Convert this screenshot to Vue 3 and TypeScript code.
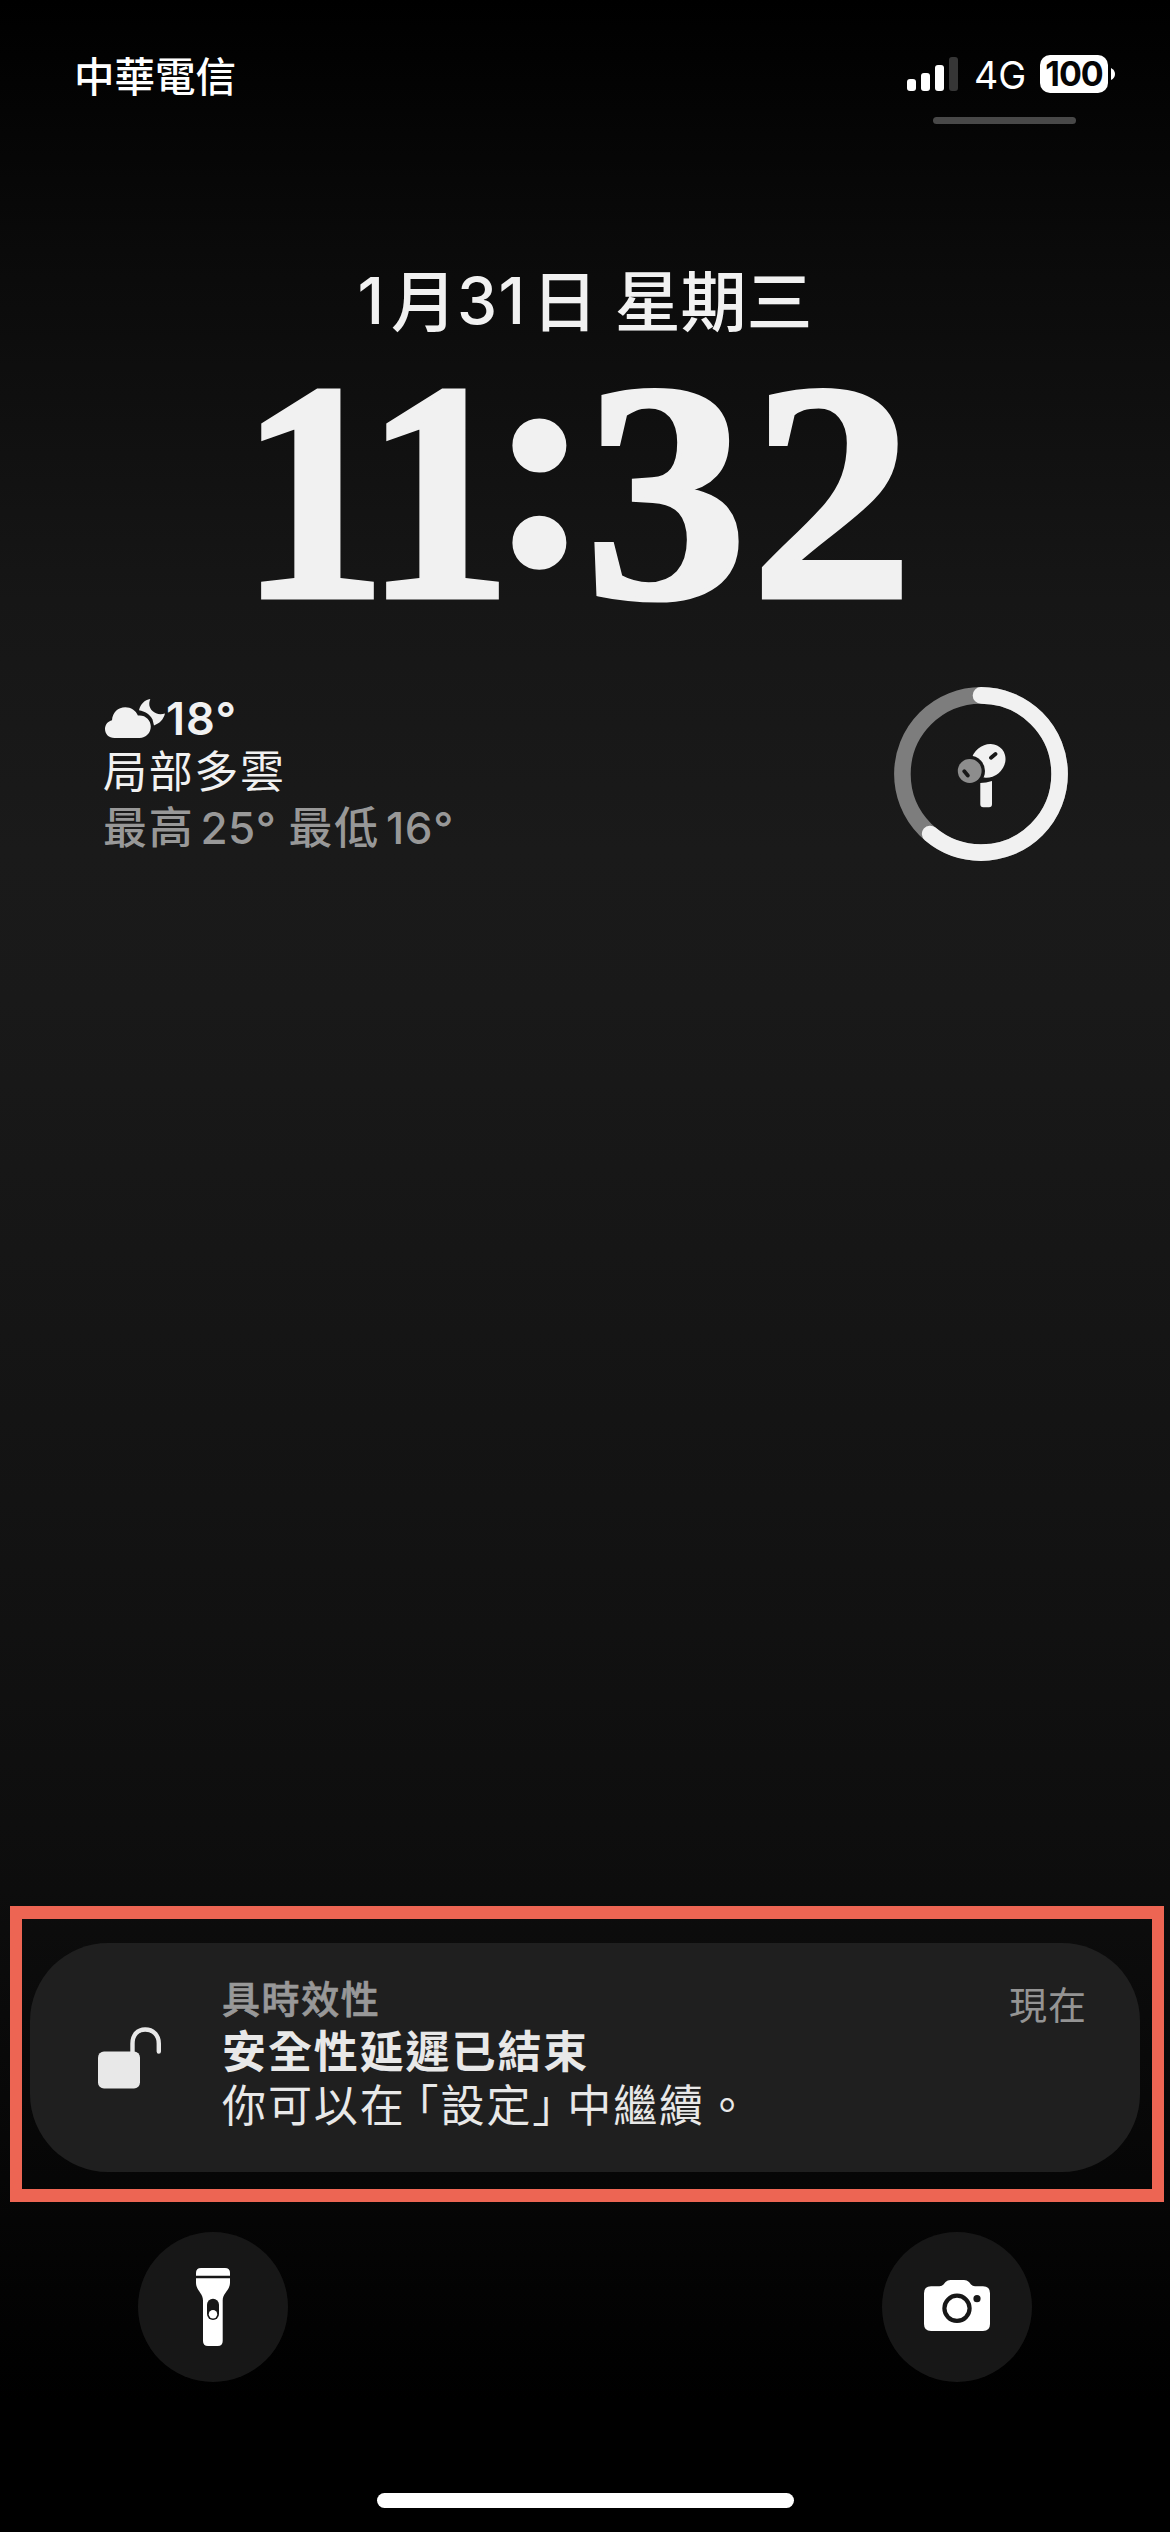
<script setup lang="ts">
interface ClockGlyph {
  char: string
  kind: string
}

const carrier = '中華電信'
const network = '4G'
const battery = 100
const signalBars = [
  { height: 12, active: true },
  { height: 18, active: true },
  { height: 26, active: true },
  { height: 34, active: false },
]

const clock: ClockGlyph[] = [
  { char: '11', kind: 'ones' },
  { char: ':', kind: 'colon' },
  { char: '3', kind: 'three' },
  { char: '2', kind: 'two' },
]
</script>

<template>
  <main class="screen">
    <header class="status">
      <span class="carrier">{{ carrier }}</span>
      <div class="indicators">
        <div class="signal">
          <i
            v-for="(bar, i) in signalBars"
            :key="i"
            class="bar"
            :class="{ dim: !bar.active }"
            :style="{ height: bar.height + 'px' }"
          ></i>
        </div>
        <span class="network">{{ network }}</span>
        <div class="battery">{{ battery }}</div>
        <svg class="nub" width="4" height="12" viewBox="0 0 4 12"><path d="M0 0Q4 2 4 6T0 12Z" fill="#fff" /></svg>
      </div>
    </header>
    <div class="grabber"></div>

    <div class="date"><span class="month">1</span><span class="han">月</span><span class="day">31</span><span class="han">日</span><span class="han week">星期三</span></div>

    <div class="clock">
      <span v-for="(g, i) in clock" :key="i" class="glyph" :class="g.kind"><b>{{ g.char }}</b></span>
    </div>

    <section class="widgets">
      <div class="weather">
        <div class="temp">
          <svg width="62" height="41" viewBox="0 0 62 41" fill="#f1f1f1">
            <path d="M10.5 40C4.8 40 1 36 1 31c0-4.500 3-7.800 7-8.800C8.500 14.500 14 9.300 21.300 9.300c5.700 0 10.500 3.300 12.600 8.200C41 16.500 46.800 21.700 46.800 28.600 46.800 35 42 40 35.500 40Z" />
            <path d="M46.300 1C40.500 2 36.500 6 35 12.200 41 13.300 45.800 16 48.500 21.500L50 27.400C55.500 25.500 59.500 21.500 61 15.500 56 17 51.500 16 48.500 13 45 9.500 44.500 5.500 46.300 1Z" />
          </svg>
          <span>18°</span>
        </div>
        <div class="condition">局部多雲</div>
        <div class="range"><span class="han">最高</span><span class="deg">25°</span><span class="han low">最低</span><span class="deg">16°</span></div>
      </div>
      <svg class="ring" width="174" height="174" viewBox="0 0 174 174" fill="none">
        <circle cx="87" cy="87" r="78.600" stroke="#7d7d7d" stroke-width="16.600" />
        <circle
          cx="87" cy="87" r="78.600" stroke="#f1f1f1" stroke-width="16.600" stroke-linecap="round"
          pathLength="100" stroke-dasharray="61.200 100" transform="rotate(-90 87 87)"
        />
        <ellipse cx="94.300" cy="73.900" rx="18" ry="16" transform="rotate(-40 94.300 73.900)" fill="#f1f1f1" />
        <path d="M86.300 96Q92 95.800 98 94V117.300Q98 120.300 95 120.300H89.300Q86.300 120.300 86.300 117.300Z" fill="#f1f1f1" />
        <circle cx="75.700" cy="84" r="15.300" fill="#191919" />
        <circle cx="75.700" cy="84" r="11.900" fill="#8d8d8d" />
        <path d="M97 70.800L101.500 67M70.300 84.300L73.800 88.500" stroke="#191919" stroke-width="3.800" stroke-linecap="round" />
      </svg>
    </section>

    <section class="highlight">
      <article class="card">
        <svg class="lock" width="64" height="62" viewBox="0 0 64 62" fill="none">
          <rect x="0" y="24.500" width="42" height="37" rx="6" fill="#e8e8e8" />
          <path d="M34.500 27V16.500C34.500 8 39.500 2.500 47.200 2.500S60.800 8 60.800 16.500V24.500" stroke="#e8e8e8" stroke-width="4.400" stroke-linecap="round" />
        </svg>
        <div class="message">
          <div class="tag">具時效性</div>
          <div class="title">安全性延遲已結束</div>
          <div class="body">你可以在<span class="open">「</span>設定<span class="close">」</span>中繼續。</div>
        </div>
        <time class="when">現在</time>
      </article>
    </section>

    <nav class="actions">
      <button class="round" aria-label="手電筒">
        <svg width="150" height="150" viewBox="0 0 150 150" fill="#fff">
          <path d="M58 43.700V41Q58 36 63 36H87Q92 36 92 41V43.700Z" />
          <path d="M58 46.200H92V50.500C92 58.500 84.700 61 84.700 68.500V109Q84.700 114 79.700 114H70Q65 114 65 109V68.500C65 61 58 58.500 58 50.500Z" />
          <rect x="69" y="66.700" width="12" height="21.300" rx="6" fill="#171717" />
          <circle cx="75" cy="82.300" r="4.200" />
        </svg>
      </button>
      <button class="round" aria-label="相機">
        <svg width="150" height="150" viewBox="0 0 150 150" fill="#fff">
          <path d="M49 54.300H57.500Q60 54.300 61.500 52.500L63.500 50Q65.500 48 68.500 48H82Q85 48 87 50L89 52.500Q90.500 54.300 93 54.300H101Q108 54.300 108 61.300V92Q108 99 101 99H49Q42 99 42 92V61.300Q42 54.300 49 54.300Z" />
          <circle cx="75" cy="76.300" r="12.600" stroke="#171717" stroke-width="4.200" />
          <circle cx="95" cy="66.700" r="3.600" fill="#171717" />
        </svg>
      </button>
    </nav>

    <div class="home"></div>
  </main>
</template>

<style>
body {
  background: #000;
}
</style>

<style scoped>
.screen {
  width: 1170px;
  height: 2532px;
  box-sizing: border-box;
  overflow: hidden;
  display: flex;
  flex-direction: column;
  color: #f1f1f1;
  font-family: Inter, 'Noto Sans CJK TC', sans-serif;
  background: linear-gradient(180deg, #000 0, #040404 110px, #0a0a0a 250px, #161616 600px, #1a1a1a 850px, #191919 1000px, #131313 1500px, #0d0d0d 1890px, #050505 2220px, #000 2400px);
}

.status {
  height: 117px;
  flex: none;
  box-sizing: border-box;
  padding: 47px 55px 0 74px;
  display: flex;
  justify-content: space-between;
  align-items: flex-start;
  color: #fff;
}

.carrier {
  font-size: 40.500px;
  line-height: 56px;
  font-weight: 500;
  font-family: 'Noto Sans CJK TC', sans-serif;
}

.indicators {
  display: flex;
  height: 54px;
}

.signal {
  display: flex;
  align-items: flex-end;
  gap: 5px;
  width: 67px;
  height: 44px;
}

.bar {
  width: 9px;
  border-radius: 3px;
  background: #fff;
}

.bar.dim {
  background: #363636;
}

.network {
  width: 66px;
  font-size: 37.500px;
  line-height: 57px;
}

.battery {
  width: 68px;
  height: 38px;
  margin-top: 8px;
  border-radius: 10px;
  background: #fff;
  color: #050505;
  font-size: 34px;
  font-weight: 700;
  line-height: 38px;
  text-align: center;
  letter-spacing: -1px;
}

.nub {
  margin: 21px 0 0 3px;
}

.grabber {
  flex: none;
  width: 143px;
  height: 7px;
  border-radius: 4px;
  margin-left: 933px;
  background: #484848;
}

.date {
  flex: none;
  height: 96px;
  margin-top: 129px;
  display: flex;
  justify-content: center;
  font-size: 64px;
  line-height: 96px;
  font-weight: 500;
}

.date .han {
  font-family: 'Noto Sans CJK TC', sans-serif;
  font-size: 66px;
  line-height: 89px;
}

.month {
  margin-right: 7px;
}

.day {
  margin-right: 5px;
  letter-spacing: 1.500px;
}

.date .week {
  margin-left: 17px;
}

.clock {
  flex: none;
  height: 260px;
  margin: 13px 0 0 255px;
  display: flex;
  font-family: 'Liberation Serif', serif;
  font-size: 312px;
  line-height: 260px;
  font-kerning: none;
  -webkit-text-stroke: 5px #f1f1f1;
}

.glyph {
  display: flex;
  justify-content: center;
}

.glyph b {
  display: block;
}

.glyph.ones {
  width: 250px;
  justify-content: flex-start;
}

.ones b {
  letter-spacing: -23px;
  margin-left: -15px;
  transform: scaleX(0.94);
  transform-origin: left center;
}

.colon {
  width: 71px;
}

.colon b {
  font-size: 303px;
  transform: translateY(-31px);
}

.three {
  width: 179px;
}

.three b,
.two b {
  transform: scaleX(1.040);
}

.two {
  width: 154px;
}

.widgets {
  flex: none;
  height: 190px;
  margin-top: 65px;
  padding: 0 102px 0 103px;
  display: flex;
  justify-content: space-between;
}

.weather {
  padding-top: 4px;
}

.temp {
  display: flex;
  height: 54px;
  font-size: 45px;
  font-weight: 600;
  line-height: 56px;
  letter-spacing: 1px;
}

.temp svg {
  margin: 7px 0 0 1px;
}

.condition {
  font-size: 44px;
  line-height: 54px;
  letter-spacing: 1.700px;
}

.range {
  display: flex;
  color: #989898;
  font-size: 44px;
  line-height: 58px;
  font-weight: 500;
}

.range .han {
  letter-spacing: 1.700px;
}

.low {
  margin-left: 12px;
}

.deg {
  margin-left: 6px;
  letter-spacing: 0.600px;
}

.highlight {
  flex: none;
  width: 1154px;
  height: 296px;
  box-sizing: border-box;
  margin: 1029px 0 0 10px;
  padding: 24px 12px 17px 8px;
  border: solid #ed6553;
  border-width: 13px 12px;
}

.card {
  height: 229px;
  box-sizing: border-box;
  border-radius: 78px;
  background: #1f1f1f;
  display: flex;
  padding: 0 53px 0 68px;
}

.lock {
  margin-top: 84px;
  flex: none;
}

.message {
  margin: 29px 0 0 60px;
  color: #e8e8e8;
  font-family: 'Noto Sans CJK TC', sans-serif;
  font-size: 44px;
  letter-spacing: 1.900px;
}

.tag {
  font-size: 38px;
  line-height: 50px;
  letter-spacing: 1.600px;
  font-weight: 500;
  -webkit-text-stroke: 0.700px #989898;
  color: #989898;
}

.title {
  line-height: 54px;
  font-weight: 700;
}

.body {
  line-height: 54px;
  font-weight: 400;
}

.open {
  margin-left: -11px;
}

.close {
  margin-right: -11px;
}

.when {
  margin: 35px 0 0 auto;
  font-family: 'Noto Sans CJK TC', sans-serif;
  font-size: 38px;
  line-height: 50px;
  letter-spacing: 1px;
  font-weight: 400;
  color: #949494;
}

.actions {
  flex: none;
  margin-top: 30px;
  padding: 0 138px;
  display: flex;
  justify-content: space-between;
}

.round {
  width: 150px;
  height: 150px;
  padding: 0;
  border: 0;
  border-radius: 50%;
  background: #171717;
}

.round svg {
  display: block;
}

.home {
  flex: none;
  width: 417px;
  height: 15px;
  border-radius: 8px;
  margin: 111px 0 0 377px;
  background: #fff;
}
</style>
